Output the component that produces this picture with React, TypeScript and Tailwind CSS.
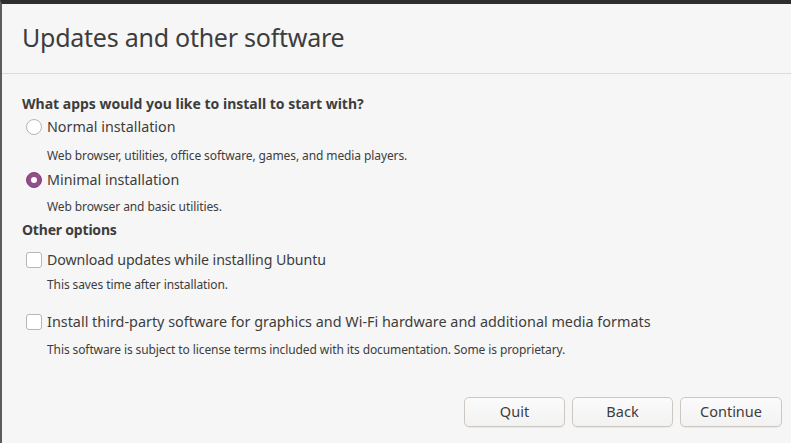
import React, { useState } from 'react';

const font = { fontFamily: '"Noto Sans", "Open Sans", sans-serif' };

const Radio: React.FC<{ checked: boolean; onClick: () => void }> = ({ checked, onClick }) => (
  <button
    onClick={onClick}
    className={`w-4 h-4 rounded-full flex items-center justify-center shrink-0 ${
      checked ? 'bg-[#924d8b] border border-[#7d3f77]' : 'bg-white border border-[#b9b5b2]'
    }`}
  >
    {checked && <span className="w-[6px] h-[6px] rounded-full bg-white" />}
  </button>
);

const Checkbox: React.FC<{ checked: boolean; onClick: () => void }> = ({ checked, onClick }) => (
  <button
    onClick={onClick}
    className={`w-4 h-4 rounded-[3px] shrink-0 flex items-center justify-center ${
      checked ? 'bg-[#924d8b] border border-[#7d3f77]' : 'bg-white border border-[#b9b5b2]'
    }`}
  >
    {checked && (
      <svg viewBox="0 0 16 16" className="w-3 h-3" fill="none" stroke="white" strokeWidth="2">
        <path d="M3 8l3 3 7-7" />
      </svg>
    )}
  </button>
);

const Btn: React.FC<{ label: string; w: string }> = ({ label, w }) => (
  <button
    className={`${w} h-[30px] rounded-[5px] border border-[#cdc7c2] bg-gradient-to-b from-[#fbfbfb] to-[#f2f2f2] text-[14.5px] text-[#3d3d3d] shadow-[0_1px_0_rgba(0,0,0,0.05)]`}
  >
    {label}
  </button>
);

export default function App() {
  const [mode, setMode] = useState<'normal' | 'minimal'>('minimal');
  const [updates, setUpdates] = useState(false);
  const [thirdParty, setThirdParty] = useState(false);

  return (
    <div
      className="w-[791px] h-[443px] bg-[#f6f6f6] border-t-4 border-t-[#2e2e2e] border-l-2 border-l-[#5c5c5c] flex flex-col text-[#3d3d3d] overflow-hidden"
      style={font}
    >
      <div className="h-[70px] border-b border-[#dbdbdb] flex items-center pl-[20px] pb-[2px]">
        <h1 className="text-[25px] tracking-[-0.25px]">Updates and other software</h1>
      </div>

      <div className="pl-[20px] flex flex-col">
        <div className="h-5 mt-[19px] flex items-center font-bold text-[14px]">
          What apps would you like to install to start with?
        </div>

        <div className="h-5 mt-[4px] flex items-center gap-[5px] pl-[4px] text-[14.3px]">
          <Radio checked={mode === 'normal'} onClick={() => setMode('normal')} />
          <span>Normal installation</span>
        </div>
        <div className="h-5 mt-[9px] flex items-center pl-[25px] text-[12px] tracking-[-0.1px]">
          Web browser, utilities, office software, games, and media players.
        </div>

        <div className="h-5 mt-[4px] flex items-center gap-[5px] pl-[4px] text-[14.3px]">
          <Radio checked={mode === 'minimal'} onClick={() => setMode('minimal')} />
          <span>Minimal installation</span>
        </div>
        <div className="h-5 mt-[7px] flex items-center pl-[25px] text-[12px] tracking-[-0.1px]">
          Web browser and basic utilities.
        </div>

        <div className="h-5 mt-[2px] flex items-center font-bold text-[14px] tracking-[-0.2px]">Other options</div>

        <div className="h-5 mt-[11px] flex items-center gap-[5px] pl-[4px] text-[14.2px] tracking-[-0.1px]">
          <Checkbox checked={updates} onClick={() => setUpdates(!updates)} />
          <span>Download updates while installing Ubuntu</span>
        </div>
        <div className="h-5 mt-[5px] flex items-center pl-[25px] text-[12px] tracking-[-0.1px]">
          This saves time after installation.
        </div>

        <div className="h-5 mt-[17px] flex items-center gap-[5px] pl-[4px] text-[14.4px]">
          <Checkbox checked={thirdParty} onClick={() => setThirdParty(!thirdParty)} />
          <span>Install third-party software for graphics and Wi-Fi hardware and additional media formats</span>
        </div>
        <div className="h-5 mt-[8px] flex items-center pl-[25px] text-[12px] tracking-[-0.1px]">
          This software is subject to license terms included with its documentation. Some is proprietary.
        </div>
      </div>

      <div className="mt-auto mb-[16px] flex justify-end gap-[7px] pr-[9px]">
        <Btn label="Quit" w="w-[101px]" />
        <Btn label="Back" w="w-[101px]" />
        <Btn label="Continue" w="w-[102px]" />
      </div>
    </div>
  );
}
